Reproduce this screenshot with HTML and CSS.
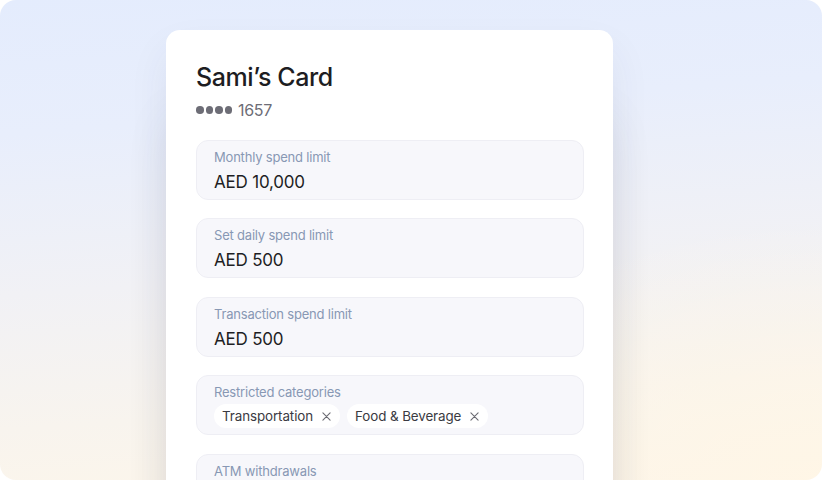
FILE: index.html
```html
<!DOCTYPE html>
<html lang="en">
<head>
<meta charset="utf-8">
<title>Sami's Card</title>
<link rel="stylesheet" href="styles.css">
</head>
<body>
<div class="stage">
  <div class="card">
    <h1 class="title">Sami’s Card</h1>
    <div class="number">
      <span class="dots"><i></i><i></i><i></i><i></i></span>
      <span class="digits">1657</span>
    </div>
    <div class="fields">
      <div class="field">
        <div class="label">Monthly spend limit</div>
        <div class="value">AED 10,000</div>
      </div>
      <div class="field">
        <div class="label">Set daily spend limit</div>
        <div class="value">AED 500</div>
      </div>
      <div class="field">
        <div class="label">Transaction spend limit</div>
        <div class="value">AED 500</div>
      </div>
      <div class="field">
        <div class="label">Restricted categories</div>
        <div class="chips">
          <span class="chip">Transportation
            <svg class="x" viewBox="0 0 10 10" width="9" height="9"><path d="M1 1L9 9M9 1L1 9" stroke="#6a6a72" stroke-width="1.2" stroke-linecap="round"/></svg>
          </span>
          <span class="chip">Food &amp; Beverage
            <svg class="x" viewBox="0 0 10 10" width="9" height="9"><path d="M1 1L9 9M9 1L1 9" stroke="#6a6a72" stroke-width="1.2" stroke-linecap="round"/></svg>
          </span>
        </div>
      </div>
      <div class="field">
        <div class="label">ATM withdrawals</div>
      </div>
    </div>
  </div>
</div>
</body>
</html>
```

FILE: styles.css
```css
html, body {
  margin: 0;
  padding: 0;
  background: #ffffff;
}
body {
  width: 822px;
  height: 480px;
  overflow: hidden;
  font-family: Inter, "Noto Sans", sans-serif;
}
.stage {
  width: 822px;
  height: 480px;
  border-radius: 16px;
  overflow: hidden;
  background:
    radial-gradient(ellipse 420px 260px at 100% 100%, rgba(255, 246, 230, 0.9), rgba(255, 246, 230, 0) 100%),
    linear-gradient(176deg, #e4ecfd 0%, #e8eefc 25%, #f1f1f5 55%, #f8f4ee 80%, #fdf6ea 100%);
  display: flex;
  justify-content: flex-start;
  padding-left: 166px;
  padding-top: 30px;
  box-sizing: border-box;
}
.card {
  width: 447px;
  height: 600px;
  flex: none;
  background: #ffffff;
  border-radius: 14px;
  box-sizing: border-box;
  padding: 30px 29px 0 30px;
  box-shadow: 0 80px 50px -10px rgba(50, 55, 80, 0.14), 0 20px 40px rgba(50, 60, 90, 0.07);
}
.title {
  margin: 0;
  font-size: 25px;
  line-height: 34px;
  font-weight: 500;
  color: #1d1d22;
  letter-spacing: -0.4px;
}
.number {
  display: flex;
  align-items: center;
  gap: 6px;
  margin-top: 4px;
  height: 24px;
}
.dots {
  display: flex;
  gap: 2px;
}
.dots i {
  width: 7.5px;
  height: 7.5px;
  border-radius: 50%;
  background: #6d6d76;
}
.digits {
  font-size: 16px;
  color: #6d6d76;
  letter-spacing: -0.3px;
}
.fields {
  display: flex;
  flex-direction: column;
  gap: 18.4px;
  margin-top: 18px;
}
.field {
  background: #f7f7fb;
  border: 1px solid #eeeef4;
  border-radius: 12px;
  padding: 7px 17px 5px;
  height: 60px;
  box-sizing: border-box;
}
.label {
  font-size: 13px;
  line-height: 18px;
  color: #8898b4;
  letter-spacing: -0.2px;
}
.value {
  margin-top: 4px;
  font-size: 17px;
  line-height: 24px;
  color: #1e1e24;
  letter-spacing: -0.2px;
}
.chips {
  display: flex;
  gap: 7px;
  margin-top: 3px;
}
.chip {
  display: inline-flex;
  align-items: center;
  gap: 9px;
  height: 24px;
  padding: 0 9px 0 8px;
  background: #ffffff;
  border-radius: 12px;
  font-size: 13.4px;
  color: #3a3a42;
  letter-spacing: -0.1px;
}
.x {
  display: block;
}
```
